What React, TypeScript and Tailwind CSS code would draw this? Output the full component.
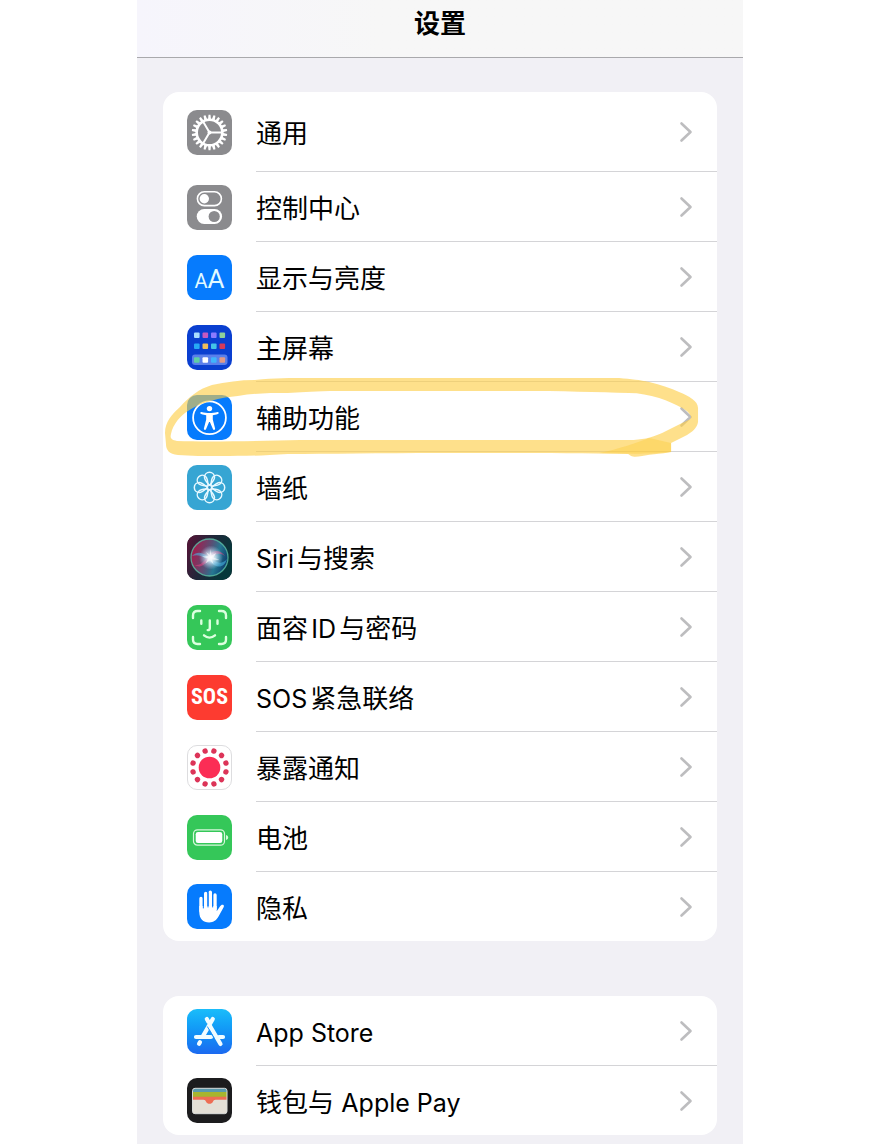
import type { ReactNode } from 'react';
import { cva } from 'class-variance-authority';
import clsx from 'clsx';

type SettingItem = {
  label: string;
  icon: ReactNode;
  tone: Tone;
  circled?: boolean;
};

type Tone = 'gray' | 'blue' | 'navy' | 'cyan' | 'black' | 'green' | 'red' | 'white' | 'store' | 'ink';

const tile = cva('flex size-[45px] shrink-0 items-center justify-center overflow-hidden rounded-[10px]', {
  variants: {
    tone: {
      gray: 'bg-[#8b8b8e]',
      blue: 'bg-[#067bfd]',
      navy: 'bg-[#0a3fd0]',
      cyan: 'bg-[#36a5d3]',
      black: 'bg-[#10101c]',
      green: 'bg-[#35c759]',
      red: 'bg-[#fd3b30]',
      white: 'border border-[#dddddf] bg-white',
      store: 'bg-linear-to-b from-[#1bbdfa] to-[#1c69f0]',
      ink: 'bg-[#1c1c1e]',
    },
  },
});

function Glyph({ children }: { children: ReactNode }) {
  return (
    <svg viewBox="0 0 45 45" className="size-[45px] shrink-0" fill="none" aria-hidden="true">
      {children}
    </svg>
  );
}

function GearIcon() {
  const teeth = Array.from({ length: 22 }, (_, i) => (i * 360) / 22);
  return (
    <Glyph>
      <circle cx="22.5" cy="22.5" r="12.8" stroke="#fff" strokeWidth="2.6" />
      {teeth.map((a) => (
        <path key={a} d="M21 9.500 21.500 4.800h2l.5 4.700z" fill="#fff" transform={`rotate(${a} 22.5 22.5)`} />
      ))}
      <path d="M22.5 22.5H35M22.5 22.5 16.2 11.7M22.5 22.5 16.2 33.3" stroke="#fff" strokeWidth="2" />
      <circle cx="22.5" cy="22.5" r="2" fill="#fff" />
    </Glyph>
  );
}

function ControlIcon() {
  return (
    <Glyph>
      <rect x="10.4" y="6.800" width="24" height="13.800" rx="6.900" stroke="#fff" strokeWidth="1.600" />
      <circle cx="17.3" cy="13.7" r="4.7" fill="#fff" />
      <rect x="9.7" y="24" width="25.4" height="15" rx="7.5" fill="#fff" />
      <circle cx="27.2" cy="31.5" r="5.6" fill="#8b8b8e" />
    </Glyph>
  );
}

function HomeIcon() {
  const rows = [
    { y: 7.5, colors: ['#a9dcff', '#c559c0', '#8b7bff', '#8fd09a'] },
    { y: 18.5, colors: ['#27a9f5', '#f0bd5c', '#43c3e8', '#d43a5c'] },
    { y: 32.2, colors: ['#5fd0a4', '#ffffff', '#3fb4fb', '#e39a86'] },
  ];
  return (
    <Glyph>
      <rect x="5" y="29.5" width="35.5" height="10.5" rx="3" fill="#5a7fea" />
      {rows.map((row) =>
        row.colors.map((c, i) => (
          <rect key={c} x={7 + i * 8.5} y={row.y} width="5.6" height="5.6" rx="1" fill={c} />
        )),
      )}
    </Glyph>
  );
}

function AccessibilityIcon() {
  return (
    <Glyph>
      <circle cx="22.5" cy="22.7" r="16.4" stroke="#fff" strokeWidth="1.8" />
      <circle cx="22.5" cy="13.6" r="2.7" fill="#fff" />
      <path
        d="M14.4 17c3 .7 5.400 1 8.100 1s5.100-.3 8.100-1c1.300-.2 1.600 1.700.3 2-2.100.6-3.600 1-5.100 1.200v4.200l2.300 9.200c.3 1.400-1.600 1.900-2.100.6L22.900 27h-.8L19 34.200c-.5 1.300-2.400.8-2.100-.6l2.300-9.200v-4.200c-1.500-.2-3-.6-5.100-1.200-1.300-.3-1-2.200.3-2z"
        fill="#fff"
      />
    </Glyph>
  );
}

function FlowerIcon() {
  return (
    <Glyph>
      {[0, 45, 90, 135, 180, 225, 270, 315].map((a) => (
        <g key={a} transform={`rotate(${a} 22.5 22.5)`} stroke="#e6f8ff">
          <path
            d="M22.500 20.500c-2.500-3-5-5.300-5-8.200 0-2.900 2.300-5 5-5s5 2.100 5 5c0 2.900-2.500 5.200-5 8.200z"
            strokeWidth="1.500"
            strokeLinejoin="round"
          />
        </g>
      ))}
      <circle cx="22.5" cy="22.5" r="2" fill="#2b91c4" stroke="#e6f8ff" strokeWidth="1.200" />
    </Glyph>
  );
}

function SiriIcon() {
  return (
    <Glyph>
      <defs>
        <linearGradient id="siri-bg" x1="0" y1="0" x2="1" y2="0.4">
          <stop offset="0" stopColor="#5b1236" />
          <stop offset="0.5" stopColor="#21263a" />
          <stop offset="1" stopColor="#06383a" />
        </linearGradient>
        <linearGradient id="siri-orb" x1="0" y1="0.3" x2="1" y2="0.6">
          <stop offset="0" stopColor="#d0144f" />
          <stop offset="0.45" stopColor="#6f5a86" />
          <stop offset="0.7" stopColor="#2c8fae" />
          <stop offset="1" stopColor="#0d3b7c" />
        </linearGradient>
        <radialGradient id="siri-glow">
          <stop offset="0" stopColor="#fff" />
          <stop offset="0.35" stopColor="#e8f6ff" stopOpacity="0.8" />
          <stop offset="1" stopColor="#b8dcff" stopOpacity="0" />
        </radialGradient>
      </defs>
      <rect width="45" height="45" fill="url(#siri-bg)" />
      <circle cx="22.5" cy="22.5" r="18.5" fill="url(#siri-orb)" opacity="0.75" />
      <path d="M5 21c6-6 12-3 18 2s12 7 17 1c-3 10-11 9-17 3S11 19 5 21z" fill="#4bb9e8" opacity="0.55" />
      <path d="M8 30c6 4 10-1 15-6s9-7 15-3c-5-7-12-6-16-1S14 31 8 30z" fill="#e6407e" opacity="0.55" />
      <circle cx="22.5" cy="22.5" r="18.5" stroke="#5cc0a6" strokeWidth="1.3" opacity="0.8" />
      <circle cx="24" cy="22.5" r="12" fill="url(#siri-glow)" />
      <path d="m23 14 1.500 6.500L29 18l-2.500 4.500 6 2.500-7.500-.5 1.500 4.500-3.500-3.500-4.500 3 2.500-5-6-2 6.500-.5-2.500-4 4 3z" fill="#fff" opacity="0.6" />
    </Glyph>
  );
}

function FaceIcon() {
  return (
    <Glyph>
      <g stroke="#dcffdf" strokeWidth="2.4" strokeLinecap="round">
        <path d="M6 13v-2.500C6 7.500 7.500 6 10.500 6H13M32 6h2.500C37.500 6 39 7.500 39 10.500V13M39 32v2.500c0 3-1.500 4.500-4.500 4.500H32M13 39h-2.500C7.500 39 6 37.500 6 34.500V32" />
        <path d="M14.300 15.500v3.300M30.500 15.500v3.300M22.800 15.500v7.700c0 1.300-.6 1.900-2.100 1.900M17 30.300c3.300 2.900 7.700 2.900 11 0" />
      </g>
    </Glyph>
  );
}

function ExposureIcon() {
  return (
    <Glyph>
      <circle cx="22.5" cy="22.5" r="10.8" fill="#fb2d55" />
      {Array.from({ length: 12 }, (_, i) => (
        <circle key={i} cx="22.5" cy="5.5" r="2.7" fill="#dc3458" transform={`rotate(${15 + i * 30} 22.5 22.5)`} />
      ))}
    </Glyph>
  );
}

function BatteryIcon() {
  return (
    <Glyph>
      <rect x="6.500" y="14.800" width="31" height="15.400" rx="4" stroke="#d7f8dc" strokeWidth="1.200" />
      <rect x="8.700" y="17" width="26.600" height="11" rx="2.300" fill="#fff" />
      <path d="M39 20c1.600.5 2.200 1.500 2.200 2.500S40.600 24.500 39 25z" fill="#d7f8dc" />
    </Glyph>
  );
}

function HandIcon() {
  return (
    <Glyph>
      <path d="M14 14.500V27M18.700 9.500V24M23.300 8.300V24M28 11V25" stroke="#fff" strokeWidth="3.400" strokeLinecap="round" />
      <path
        d="M12.300 22h17.400v5.200l3.400-5c.8-1.200 1.900-1.800 3-1.400 1 .4 1 1.400.5 2.400l-4.800 8.900c-2.300 4.300-5.200 6.400-9.600 6.400-6.200 0-9.900-4-9.900-10.500z"
        fill="#fff"
      />
      <path d="M16.350 12v12M21 9v14M25.650 10v13" stroke="#067bfd" strokeWidth="1" strokeLinecap="round" />
    </Glyph>
  );
}

function StoreIcon() {
  return (
    <Glyph>
      <g stroke="#f2fcff" strokeWidth="4.200" strokeLinecap="round">
        <path d="M25.800 10 16 27M13 33.200l-1 1.600M19.800 10l1.700 3M23 17l10.500 18" />
        <path d="M9 28h15M32 28h4" />
      </g>
      <path d="m20.300 17.500 7 12" stroke="#1e93f7" strokeWidth="1" />
    </Glyph>
  );
}

function WalletIcon() {
  return (
    <Glyph>
      <defs>
        <clipPath id="wallet-body">
          <rect x="5.5" y="10.3" width="34.5" height="25.4" rx="2.5" />
        </clipPath>
      </defs>
      <g clipPath="url(#wallet-body)">
        <path d="M5 10h36v5H5z" fill="#5a9aae" />
        <path d="M5 14h36v5H5z" fill="#a7b52e" />
        <path d="M5 18.800h36v9H5z" fill="#ee6d54" />
        <path d="M5 21.800h11.500c1.500 0 2 .8 2.600 1.900.7 1.300 1.800 2.100 3.400 2.100s2.700-.8 3.400-2.100c.6-1.100 1.100-1.900 2.600-1.900H41V36H5z" fill="#e3dfd6" />
      </g>
      <rect x="5.5" y="10.3" width="34.5" height="25.4" rx="2.5" stroke="#d9dcda" strokeWidth="1" />
    </Glyph>
  );
}

function TextSizeIcon() {
  return (
    <span className="flex items-baseline pt-1 font-['Roboto',sans-serif] text-[#e2faff]" aria-hidden="true">
      <span className="text-[20px] leading-none">A</span>
      <span className="text-[26px] leading-none">A</span>
    </span>
  );
}

function SosIcon() {
  return (
    <span
      className="font-['Liberation_Sans_Narrow','Roboto_Condensed','Open_Sans_Condensed','Roboto',sans-serif] text-[22px] leading-none font-bold text-white"
      aria-hidden="true"
    >
      SOS
    </span>
  );
}

const systemItems: SettingItem[] = [
  { label: '通用', icon: <GearIcon />, tone: 'gray' },
  { label: '控制中心', icon: <ControlIcon />, tone: 'gray' },
  { label: '显示与亮度', icon: <TextSizeIcon />, tone: 'blue' },
  { label: '主屏幕', icon: <HomeIcon />, tone: 'navy' },
  { label: '辅助功能', icon: <AccessibilityIcon />, tone: 'blue', circled: true },
  { label: '墙纸', icon: <FlowerIcon />, tone: 'cyan' },
  { label: 'Siri与搜索', icon: <SiriIcon />, tone: 'black' },
  { label: '面容ID与密码', icon: <FaceIcon />, tone: 'green' },
  { label: 'SOS紧急联络', icon: <SosIcon />, tone: 'red' },
  { label: '暴露通知', icon: <ExposureIcon />, tone: 'white' },
  { label: '电池', icon: <BatteryIcon />, tone: 'green' },
  { label: '隐私', icon: <HandIcon />, tone: 'blue' },
];

const storeItems: SettingItem[] = [
  { label: 'App Store', icon: <StoreIcon />, tone: 'store' },
  { label: '钱包与 Apple Pay', icon: <WalletIcon />, tone: 'ink' },
];

// Hand-drawn highlighter loop around a row
function MarkerLoop() {
  return (
    <svg
      viewBox="163 374 555 86"
      preserveAspectRatio="none"
      className="pointer-events-none absolute inset-x-0 -top-2 h-[86px] w-full"
      aria-hidden="true"
    >
      <path
        fill="#fdcd44"
        fillOpacity="0.62"
        fillRule="evenodd"
        d="M165 433C165 422 172 414 180 407C190 396 199 389 212 385C226 382 240 380 255 380C275 378 290 378 310 378H620C632 379 641 380 650 382C662 385 672 388 680 392C690 396 699 401 699 408V422C698 428 693 432 688 435L672 443V452C662 454 653 454 643 456C638 457 634 457 632 456L629 454C560 453 500 453 440 453C380 453 330 454 288 454C260 456 240 456 222 456C205 456 190 456 178 455C169 454 166 450 166 444ZM171 434C170 438 171 440 177 441C210 442 260 441 300 440H630C643 440 651 438 663 433L683 423C690 420 692 419 692 417C691 413 687 410 683 408C676 404 669 401 660 398C650 395 640 393 630 393C600 392 560 391 520 391H330C310 392 300 392 288 393C270 393 255 393 238 396C226 397 217 399 207 402C200 404 194 407 188 411C181 415 173 424 171 434Z"
      />
      <path fill="#fdc92f" fillOpacity="0.35" d="M600 453C620 449 636 443 650 438L672 443V452C655 454 630 454 600 453Z" />
    </svg>
  );
}

function Chevron() {
  return (
    <svg viewBox="0 0 14 22" className="h-[22px] w-[14px] shrink-0" fill="none" aria-hidden="true">
      <path d="m2.500 2.500 9 8.500-9 8.500" stroke="#bdbdbf" strokeWidth="2.600" strokeLinecap="round" strokeLinejoin="round" />
    </svg>
  );
}

// Latin runs are set one pixel smaller than the Chinese around them
function Label({ text }: { text: string }) {
  return (
    <span className="pt-1 text-[26px] leading-8 [text-autospace:normal]">
      {text.split(/([A-Za-z][A-Za-z ]*)/).map((part, i) =>
        i % 2 ? (
          <span key={i} className="text-[25px]">
            {part}
          </span>
        ) : (
          part
        ),
      )}
    </span>
  );
}

function SettingRow({ item, tall, last }: { item: SettingItem; tall: boolean; last: boolean }) {
  return (
    <li className="relative">
      <a href="#" className="flex items-stretch gap-6 pl-6">
        <span className="flex items-center">
          <span className={tile({ tone: item.tone })}>{item.icon}</span>
        </span>
        <span
          className={clsx(
            'flex flex-1 items-center justify-between pr-6',
            tall ? 'h-20' : last ? 'h-[69px]' : 'h-[70px]',
            !last && 'border-b border-[#d4d4d7]',
          )}
        >
          <Label text={item.label} />
          <Chevron />
        </span>
      </a>
      {item.circled && <MarkerLoop />}
    </li>
  );
}

function SettingGroup({ items, tallFirst = false }: { items: SettingItem[]; tallFirst?: boolean }) {
  return (
    <ul className="rounded-[16px] bg-white">
      {items.map((item, i) => (
        <SettingRow key={item.label} item={item} tall={tallFirst && i === 0} last={i === items.length - 1} />
      ))}
    </ul>
  );
}

export default function App() {
  return (
    <div className="min-h-screen bg-white font-['Inter','Noto_Sans_CJK_SC',sans-serif] text-black" lang="zh-CN">
      <div className="mx-auto flex min-h-screen w-full max-w-[606px] flex-col bg-[#f1f0f5]">
        <header className="border-b border-[#a9a9ac] bg-linear-to-r from-[#f6f5fc] to-[#f7f7f7] to-40% pt-2 pb-[17px] text-center">
          <h1 className="text-[26px] leading-8 font-bold">设置</h1>
        </header>
        <main className="flex flex-col gap-[55px] px-[26px] pt-[34px] pb-[9px]">
          <SettingGroup items={systemItems} tallFirst />
          <SettingGroup items={storeItems} />
        </main>
      </div>
    </div>
  );
}
